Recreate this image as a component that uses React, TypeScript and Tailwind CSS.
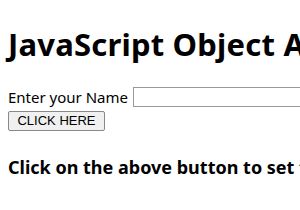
export default function App() {
  return (
    <div className="w-[300px] h-[210px] overflow-hidden bg-white text-black font-['Noto_Sans',sans-serif] px-2">
      <h1 className="whitespace-nowrap text-[31px] font-bold leading-[36px] pt-[26px] tracking-[0.2px]">JavaScript Object Assign</h1>
      <div className="mt-[25px] flex items-center whitespace-nowrap text-[15px] leading-[20px]">
        <span>Enter your Name</span>
        <input className="ml-[5px] h-[20px] w-[200px] border border-[#999] shrink-0" type="text" />
      </div>
      <button className="mt-[4px] h-[20px] w-[97px] border border-[#888] bg-[#f0f0f0] rounded-[2px] font-['Liberation_Sans',sans-serif] text-[13px] leading-[18px]">CLICK HERE</button>
      <div className="mt-[24px] whitespace-nowrap text-[18px] font-bold leading-[24px]">Click on the above button to set the value</div>
    </div>
  )
}
